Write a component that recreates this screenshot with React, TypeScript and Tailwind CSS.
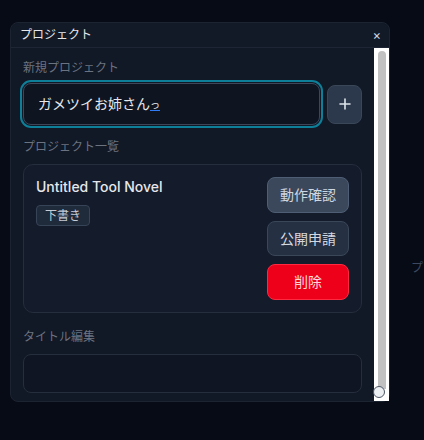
import React from 'react';

const font = { fontFamily: '"Inter", "Noto Sans CJK JP", sans-serif' };

function ActionButton({ label, tone }: { label: string; tone: 'light' | 'dark' | 'danger' }) {
  const tones = {
    light: 'bg-[#3b485c] border-[#4f5e75] text-[#cfd6df]',
    dark: 'bg-[#253043] border-[#3a4759] text-[#d3d9e1]',
    danger: 'bg-[#ee001b] border-[#ff2a40] text-[#ffd6da]',
  };
  return (
    <button className={`w-[82px] h-9 rounded-lg border text-sm ${tones[tone]}`}>
      {label}
    </button>
  );
}

export default function App() {
  return (
    <div className="flex w-[424px] h-[440px] overflow-hidden bg-[#060b16]" style={font}>
      <div className="ml-[10px] mt-[22px] w-[380px] h-[380px] shrink-0 flex flex-col rounded-lg border border-[#1c2432] bg-[#111826]">
        {/* header */}
        <div className="h-[25px] shrink-0 flex items-center justify-between pl-[9px] pr-[8px] border-b border-[#1e2635] bg-[#121a28] rounded-t-lg">
          <span className="text-[12px] text-[#e5e7eb]">プロジェクト</span>
          <span className="text-[13px] leading-none text-[#cbd5e1]">×</span>
        </div>

        <div className="flex flex-1 min-h-0">
          {/* scroll content */}
          <div className="flex-1 overflow-hidden px-3 pt-3">
            <div className="text-[12px] leading-4 text-[#6b7280]">新規プロジェクト</div>
            <div className="mt-[7px] flex items-center gap-[7px]">
              <div className="flex-1 h-[42px] flex items-center px-[14px] rounded-lg border border-[#3d4759] bg-[#0e1420] outline-[2.5px] outline-offset-[1px] outline-[#0e7f98]">
                <span className="text-sm text-[#e5e7eb]">ガメツイお姉さん</span>
                <span className="text-[10px] text-[#e5e7eb] border-b border-[#2f7cf6] leading-3">っ</span>
              </div>
              <button className="w-[35px] h-[39px] shrink-0 rounded-lg border border-[#3a4759] bg-[#2c394c] flex items-center justify-center">
                <svg width="12" height="12" viewBox="0 0 12 12" stroke="#dde3ea" strokeWidth="1.6" strokeLinecap="round">
                  <path d="M6 1v10M1 6h10" />
                </svg>
              </button>
            </div>

            <div className="mt-[14px] text-[12px] leading-4 text-[#6b7280]">プロジェクト一覧</div>
            <div className="mt-[9px] h-[149px] rounded-[10px] border border-[#252e3d] bg-[#141b2a] p-3 flex justify-between">
              <div className="flex flex-col items-start">
                <div className="text-sm leading-5 font-medium text-[#e5e7eb]">Untitled Tool Novel</div>
                <span className="mt-2 px-2 h-[21px] flex items-center rounded border border-[#374357] bg-[#1f2a3a] text-[12px] text-[#c5ccd6]">
                  下書き
                </span>
              </div>
              <div className="flex flex-col gap-2">
                <ActionButton label="動作確認" tone="light" />
                <ActionButton label="公開申請" tone="dark" />
                <ActionButton label="削除" tone="danger" />
              </div>
            </div>

            <div className="mt-4 text-[12px] leading-4 text-[#6b7280]">タイトル編集</div>
            <div className="mt-[9px] h-[39px] rounded-lg border border-[#252e3d] bg-[#0f1522]" />
          </div>

          {/* scrollbar */}
          <div className="relative w-[15px] shrink-0 bg-white pt-[3px] pb-[12px] pl-[4px] pr-[3px]">
            <div className="h-full rounded-t-full bg-[#c1c1c1]" />
            <div className="absolute left-[-1px] bottom-[3px] w-3 h-3 rounded-full border-[1.5px] border-[#4b5563] bg-[#eceff2]" />
          </div>
        </div>
      </div>

      <div className="ml-[21px] mt-[259px] shrink-0 whitespace-nowrap text-[12px] text-[#3d4860]">プ</div>
    </div>
  );
}
